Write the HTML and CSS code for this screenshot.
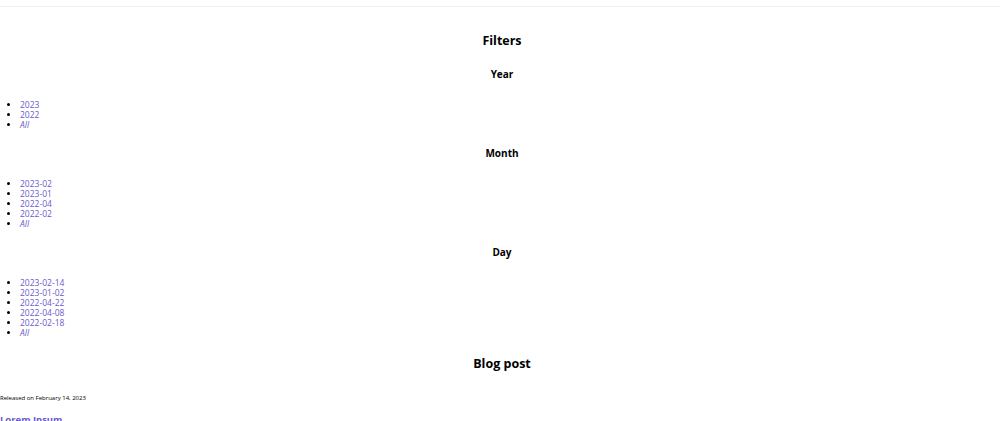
FILE: index.html
```html
<!DOCTYPE html>
<html lang="en">
<head>
<meta charset="utf-8">
<title>Blog</title>
<link rel="stylesheet" href="styles.css">
</head>
<body>
<header class="topbar"></header>
<main class="page">
  <section class="filters">
    <h2 class="section-title">Filters</h2>
    <h3 class="filter-title">Year</h3>
    <ul class="filter-list">
      <li><a href="#">2023</a></li>
      <li><a href="#">2022</a></li>
      <li><a href="#" class="all">All</a></li>
    </ul>
    <h3 class="filter-title">Month</h3>
    <ul class="filter-list">
      <li><a href="#">2023-02</a></li>
      <li><a href="#">2023-01</a></li>
      <li><a href="#">2022-04</a></li>
      <li><a href="#">2022-02</a></li>
      <li><a href="#" class="all">All</a></li>
    </ul>
    <h3 class="filter-title">Day</h3>
    <ul class="filter-list">
      <li><a href="#">2023-02-14</a></li>
      <li><a href="#">2023-01-02</a></li>
      <li><a href="#">2022-04-22</a></li>
      <li><a href="#">2022-04-08</a></li>
      <li><a href="#">2022-02-18</a></li>
      <li><a href="#" class="all">All</a></li>
    </ul>
  </section>
  <section class="blog">
    <h2 class="section-title">Blog post</h2>
    <p class="meta">Released on February 14, 2023</p>
    <h3 class="post-title"><a href="#">Lorem Ipsum</a></h3>
  </section>
</main>
</body>
</html>
```

FILE: styles.css
```css
html, body {
  margin: 0;
  padding: 0;
  background: #ffffff;
}

body {
  font-family: "Open Sans", "Noto Sans", sans-serif;
  color: #000;
}

.topbar {
  height: 6px;
  border-bottom: 1px solid #eeeeee;
}

.section-title {
  font-size: 12.5px;
  line-height: 18px;
  font-weight: 700;
  text-align: center;
  margin: 18px 0;
  padding-left: 4px;
}

.filters > .section-title {
  margin-top: 25px;
}

.filter-title {
  font-size: 10px;
  line-height: 13px;
  font-weight: 700;
  text-align: center;
  margin: 18px 0;
  padding-left: 4px;
}

.filter-list {
  margin: 0;
  padding-left: 20px;
  font-size: 8.5px;
  line-height: 10px;
  font-weight: 400;
}

.filter-list li {
  padding-top: 1px;
  margin-bottom: -1px;
}

.filter-list a {
  color: #6a5acd;
  text-decoration: none;
}

.filter-list a.all {
  font-style: italic;
}

.meta {
  font-size: 6px;
  line-height: 9px;
  margin: 21px 0 0;
}

.post-title {
  font-size: 9.5px;
  line-height: 13px;
  font-weight: 700;
  margin: 10px 0 0;
}

.post-title a {
  color: #6a5acd;
  text-decoration: none;
}
```
